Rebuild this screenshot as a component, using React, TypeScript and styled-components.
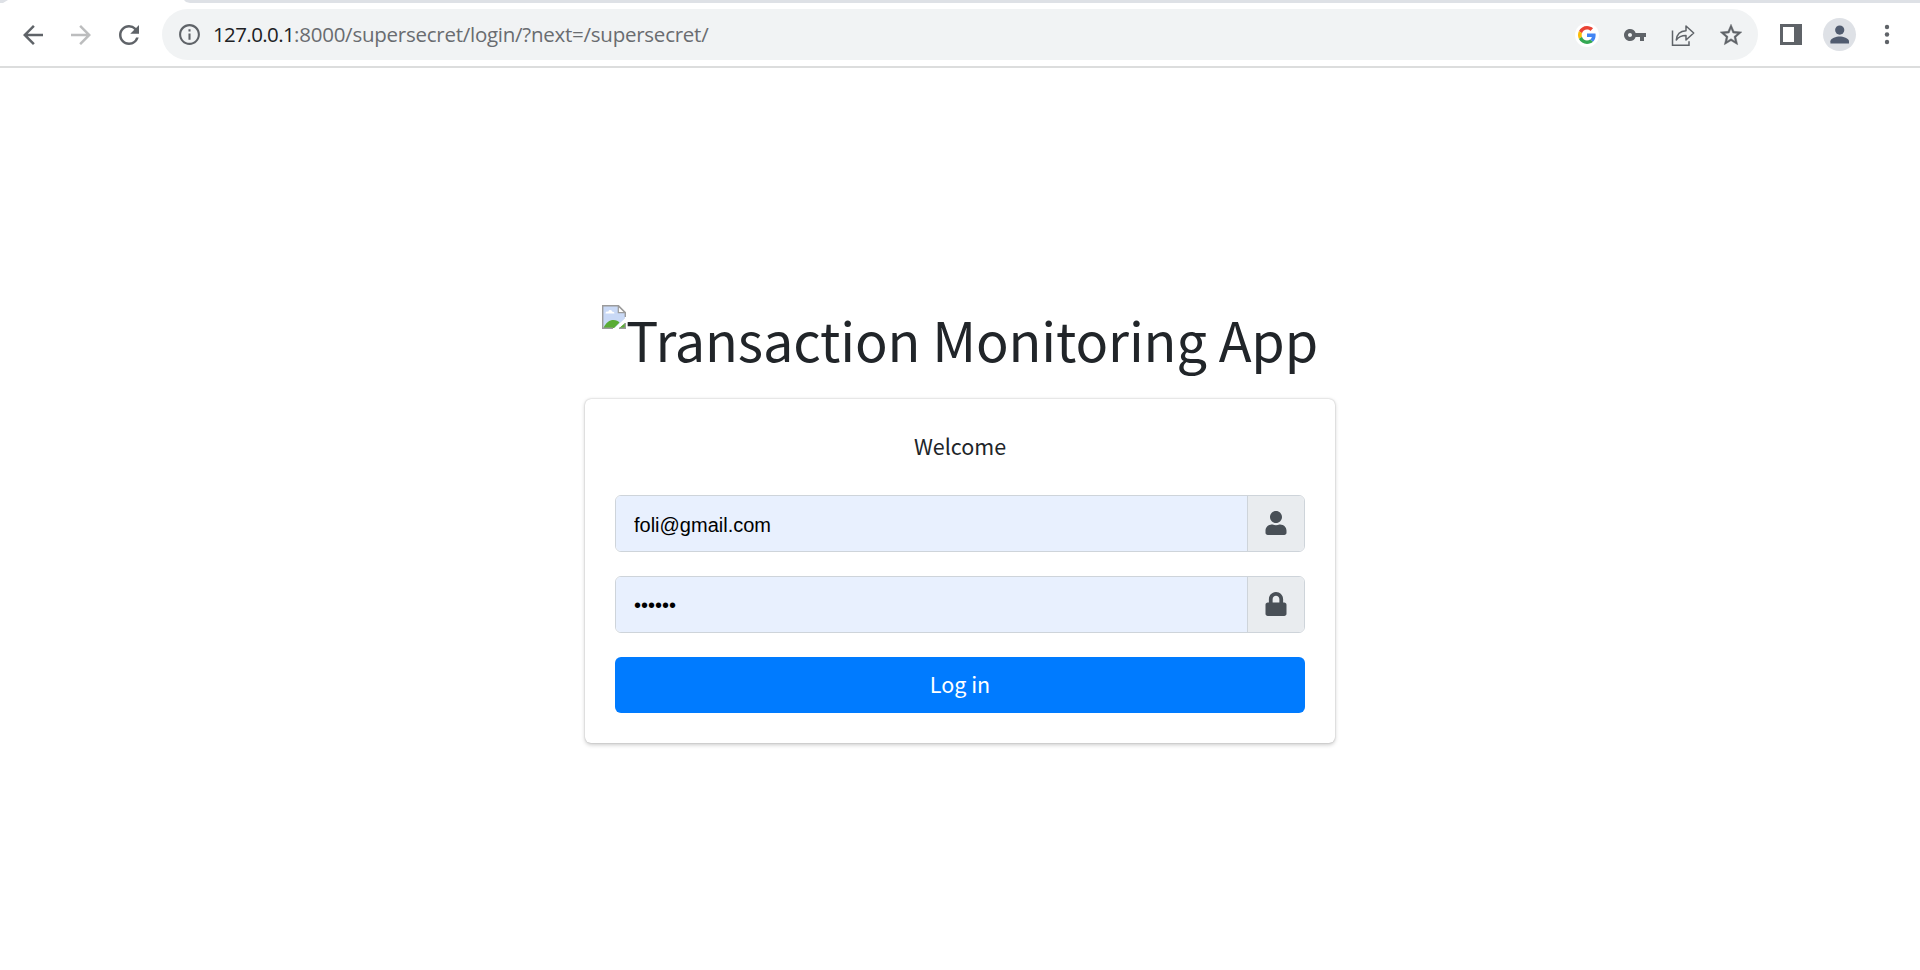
import React from 'react';
import styled, { createGlobalStyle } from 'styled-components';
import { MdArrowBack, MdArrowForward, MdRefresh, MdInfoOutline, MdVpnKey } from 'react-icons/md';
import { FaUser, FaLock } from 'react-icons/fa';

const sans = `'Noto Sans CJK SC', 'Open Sans', sans-serif`;

const GlobalStyle = createGlobalStyle`
  *, *::before, *::after { box-sizing: border-box; }
  body { margin: 0; background: #fff; color: #212529; font-family: ${sans}; overflow: hidden; }
`;

const Page = styled.div`
  display: flex;
  flex-direction: column;
  height: 970px;
`;

const TabStrip = styled.div`
  display: flex;
  height: 3px;
  flex: none;
  background: #dee1e6;
`;

const ActiveTab = styled.div`
  width: 187px;
  margin-left: 3px;
  background: #fff;
  clip-path: polygon(5px 0, 181px 0, 183px 2px, 187px 3px, 0 3px);
`;

const Toolbar = styled.header`
  display: flex;
  align-items: center;
  flex: none;
  height: 65px;
  padding: 0 18px;
  border-bottom: 2px solid #dcdddd;
  background: #fff;
`;

const NavButton = styled.button<{ $disabled?: boolean }>`
  display: grid;
  place-items: center;
  width: 30px;
  height: 30px;
  padding: 0 0 1px;
  margin-right: 18px;
  border: 0;
  background: none;
  color: ${(p) => (p.$disabled ? '#bcbdbe' : '#5f6368')};
  svg { display: block; }
`;

const AddressBar = styled.div`
  display: flex;
  align-items: center;
  width: 1596px;
  height: 51px;
  padding: 0 14px 0 15px;
  border-radius: 26px;
  background: #f1f3f4;
  color: #5f6368;
  svg { display: block; flex: none; }
`;

const Url = styled.div`
  flex: 1;
  margin-left: 11px;
  padding-bottom: 1px;
  font: 20.5px/30px 'Open Sans', sans-serif;
  letter-spacing: -0.25px;
  color: #696c70;
  white-space: nowrap;
`;

const Host = styled.span`
  color: #202124;
  letter-spacing: -0.6px;
`;

const Actions = styled.div`
  display: flex;
  align-items: center;
  gap: 24px;

  > :last-child { margin-left: -1px; }
`;

const SearchBadge = styled.span`
  display: grid;
  place-items: center;
  width: 24px;
  height: 24px;
  border-radius: 50%;
  background: #fff;
`;

const Tools = styled.div`
  display: flex;
  align-items: center;
  margin-left: 22px;
  svg { display: block; }
`;

const Avatar = styled.span`
  display: grid;
  place-items: center;
  width: 33px;
  height: 33px;
  margin: 0 28px 0 21px;
  border-radius: 50%;
  background: #dee1e6;
`;

const Main = styled.main`
  display: flex;
  flex-direction: column;
  align-items: center;
  flex: 1;
  padding-top: 237px;
`;

const Heading = styled.h1`
  display: flex;
  align-items: flex-start;
  height: 94px;
  width: 716px;
  margin: 0;
  font-weight: 400;
  font-size: 54px;
  line-height: 68px;
  white-space: nowrap;
  svg { flex: none; }
`;

const Title = styled.span`
  letter-spacing: -0.14px;
`;

const Card = styled.section`
  width: 750px;
  height: 344px;
  padding: 30px;
  border-radius: 6px;
  background: #fff;
  box-shadow: 0 0 1.5px rgba(0, 0, 0, 0.25), 0 1.5px 4.5px rgba(0, 0, 0, 0.2);
`;

const Welcome = styled.p`
  margin: 0 0 32px;
  text-align: center;
  font-size: 21.5px;
  line-height: 34px;
`;

const Field = styled.label`
  display: flex;
  height: 57px;
  margin-bottom: 24px;
  border: 1px solid #ced4da;
  border-radius: 6px;
  overflow: hidden;
`;

const Input = styled.input`
  flex: 1;
  min-width: 0;
  padding: 3px 18px 0;
  border: 0;
  outline: 0;
  background: #e8f0fe;
  color: #000;
  font: 20px 'Liberation Sans', Arial, sans-serif;

  &[type='password'] { padding-top: 1px; }
`;

const Addon = styled.span`
  display: grid;
  place-items: center;
  width: 57px;
  padding: 0 1px 1px 0;
  border-left: 1px solid #ced4da;
  background: #e9ecef;
  color: #495057;
`;

const Submit = styled.button`
  display: block;
  width: 100%;
  height: 56px;
  padding: 0 0 2px;
  border: 0;
  border-radius: 6px;
  background: #007bff;
  color: #fff;
  font: 21.5px/54px ${sans};
`;

const GoogleLogo = () => (
  <svg width="18" height="18" viewBox="0 0 48 48">
    <path fill="#EA4335" d="M24 9.5c3.54 0 6.71 1.22 9.21 3.6l6.85-6.85C35.9 2.38 30.47 0 24 0 14.62 0 6.51 5.38 2.56 13.22l7.98 6.19C12.43 13.72 17.74 9.5 24 9.5z" />
    <path fill="#4285F4" d="M46.98 24.55c0-1.57-.15-3.09-.38-4.55H24v9.02h12.94c-.58 2.96-2.26 5.48-4.78 7.18l7.73 6c4.51-4.18 7.09-10.36 7.09-17.65z" />
    <path fill="#FBBC05" d="M10.53 28.59c-.48-1.45-.76-2.99-.76-4.59s.27-3.14.76-4.59l-7.98-6.19C.92 16.46 0 20.12 0 24c0 3.88.92 7.54 2.56 10.78l7.97-6.19z" />
    <path fill="#34A853" d="M24 48c6.48 0 11.93-2.13 15.89-5.81l-7.73-6c-2.15 1.45-4.92 2.3-8.16 2.3-6.26 0-11.57-4.22-13.47-9.91l-7.98 6.19C6.51 42.62 14.62 48 24 48z" />
  </svg>
);

const ShareIcon = () => (
  <svg width="24" height="24" viewBox="0 0 24 24" fill="none" stroke="#5f6368" strokeWidth="1.5">
    <path d="M1.5 7.5v14.7h16.5v-4" />
    <path d="M5.3 17c.5-6 4-9 9.7-9.3V3l7.7 7-7.7 7v-4.4c-4.5 0-7.4 1.2-9.7 4.4z" strokeLinejoin="round" />
  </svg>
);

const StarIcon = () => (
  <svg width="26" height="26" viewBox="0 0 24 24" fill="#5f6368" stroke="#5f6368" strokeWidth="0.4">
    <path d="M22 9.24l-7.19-.62L12 2 9.19 8.63 2 9.24l5.46 4.73L5.82 21 12 17.27 18.18 21l-1.63-7.03L22 9.24zM12 15.4l-3.76 2.27 1-4.28-3.32-2.88 4.38-.38L12 6.1l1.71 4.04 4.38.38-3.32 2.88 1 4.28L12 15.4z" />
  </svg>
);

const PanelIcon = () => (
  <svg width="22" height="22" viewBox="0 0 22 22">
    <path fill="#5f6368" fillRule="evenodd" d="M0 0h22v21H0zM3 3v15h11V3z" />
  </svg>
);

const PersonIcon = () => (
  <svg width="20" height="20" viewBox="0 0 20 20" fill="#515c70">
    <circle cx="9.7" cy="5.1" r="4.6" />
    <path d="M.4 18.5v-2.2c0-3.2 6-4.9 9.3-4.9s9.3 1.7 9.3 4.9v2.2z" />
  </svg>
);

const MenuIcon = () => (
  <svg width="6" height="22" viewBox="0 0 6 22" fill="#5f6368">
    <circle cx="3" cy="3" r="2.2" />
    <circle cx="3" cy="10.5" r="2.2" />
    <circle cx="3" cy="18" r="2.2" />
  </svg>
);

const BrokenImage = () => (
  <svg width="24" height="24" viewBox="0 0 24 24">
    <path fill="#c9d9f6" d="M1 1h15l7 7v6L14 23H1z" />
    <path fill="#fff" d="M3.5 8.5c0-2 2-2.2 2.6-1.6.7-2.8 4-2.5 4.3 0 1.5-.2 2 .7 2 1.6z" />
    <path fill="#5aac36" d="M1.5 23c2.5-5.5 6-8 10-8 2.6 0 4.8 1 6 2.5L12 23zM17 23l6-5v5z" />
    <path fill="#fff" d="M11.5 24L24 12.5v4L16 24z" />
    <path d="M11 23.3H.7V.7H16.5l6.8 6.8V12M23.3 18v5.3H17" fill="none" stroke="#9b9b9b" strokeWidth="1.4" />
    <path d="M16.3 1v6.7H23z" fill="#fff" stroke="#9b9b9b" strokeWidth="1.2" />
  </svg>
);

export default function App() {
  return (
    <Page>
      <GlobalStyle />
      <TabStrip><ActiveTab /></TabStrip>
      <Toolbar>
        <NavButton aria-label="Back"><MdArrowBack size={30} /></NavButton>
        <NavButton aria-label="Forward" $disabled><MdArrowForward size={30} /></NavButton>
        <NavButton aria-label="Reload"><MdRefresh size={30} /></NavButton>
        <AddressBar>
          <MdInfoOutline size={25} />
          <Url><Host>127.0.0.1</Host>:8000/supersecret/login/?next=/supersecret/</Url>
          <Actions>
            <SearchBadge><GoogleLogo /></SearchBadge>
            <MdVpnKey size={24} />
            <ShareIcon />
            <StarIcon />
          </Actions>
        </AddressBar>
        <Tools>
          <PanelIcon />
          <Avatar><PersonIcon /></Avatar>
          <MenuIcon />
        </Tools>
      </Toolbar>
      <Main>
        <Heading><BrokenImage /><Title>Transaction Monitoring App</Title></Heading>
        <Card>
          <Welcome>Welcome</Welcome>
          <Field>
            <Input type="text" defaultValue="foli@gmail.com" />
            <Addon><FaUser size={24} /></Addon>
          </Field>
          <Field>
            <Input type="password" defaultValue="secret" />
            <Addon><FaLock size={24} /></Addon>
          </Field>
          <Submit>Log in</Submit>
        </Card>
      </Main>
    </Page>
  );
}
